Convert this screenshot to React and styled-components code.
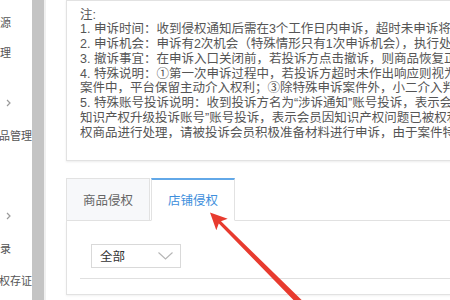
import React from 'react'
import styled, { createGlobalStyle } from 'styled-components'

const GlobalStyle = createGlobalStyle`
  html, body {
    margin: 0;
    padding: 0;
  }
  body {
    width: 450px;
    height: 300px;
    overflow: hidden;
    background: #fff;
    font-family: 'Liberation Sans', 'Noto Sans CJK SC', sans-serif;
  }
`

const Page = styled.div`
  position: relative;
  display: flex;
  width: 450px;
  height: 300px;
  overflow: hidden;
`

const Sidebar = styled.div`
  width: 32px;
  flex-shrink: 0;
  display: flex;
  flex-direction: column;
  padding-top: 7px;
  box-sizing: border-box;
  overflow: hidden;
`

const MenuItem = styled.div`
  flex-shrink: 0;
  height: ${p => p.$h}px;
  margin-top: ${p => p.$mt || 0}px;
  padding-right: ${p => p.$pr || 0}px;
  display: flex;
  align-items: center;
  justify-content: flex-end;
  white-space: nowrap;
  font-size: 11px;
  color: #555;
`

const ScrollThumb = styled.div`
  width: 12px;
  flex-shrink: 0;
  background: #c4c4c4;
`

const ScrollTrack = styled.div`
  width: 2px;
  flex-shrink: 0;
  background: #f0f0f0;
`

const Main = styled.div`
  flex: 1;
  min-width: 0;
  padding-left: 20px;
  overflow: hidden;
`

const Content = styled.div`
  width: 520px;
`

const Notice = styled.div`
  border: 1px solid #e2e2e2;
  box-shadow: 0 1px 2px rgba(0, 0, 0, 0.08);
  padding: 6.5px 13px 19.5px;
  font-size: 12.5px;
  line-height: 14.75px;
  color: #555;
  white-space: nowrap;
`

const TabBar = styled.div`
  display: flex;
  margin-top: 17px;
  border-bottom: 1px solid #e2e2e2;
`

const Tab = styled.div`
  width: 84px;
  height: ${p => (p.$active ? 43 : 42)}px;
  box-sizing: border-box;
  margin-right: 1px;
  margin-bottom: ${p => (p.$active ? -1 : 0)}px;
  display: flex;
  align-items: center;
  justify-content: center;
  font-size: 12.5px;
  color: ${p => (p.$active ? '#3f8fdc' : '#666')};
  background: ${p => (p.$active ? '#fff' : '#f7f8fa')};
  border: 1px solid #e2e2e2;
  border-bottom: ${p => (p.$active ? '1px solid #fff' : 'none')};
  border-top: ${p => (p.$active ? '2px solid #62a8e8' : '1px solid #e2e2e2')};
`

const Card = styled.div`
  border: 1px solid #e2e2e2;
  border-top: none;
  box-shadow: 0 1px 2px rgba(0, 0, 0, 0.06);
  padding: 23px 0 15px 13px;
`

const FilterRow = styled.div`
  display: flex;
  margin-left: 11px;
`

const Select = styled.div`
  width: 90px;
  height: 24px;
  box-sizing: border-box;
  border: 1px solid #d9d9d9;
  display: flex;
  align-items: center;
  justify-content: space-between;
  padding: 0 7px 0 8px;
  font-size: 12.5px;
  color: #333;
`

const TableTop = styled.div`
  margin-top: 10px;
  border-top: 1px solid #e0e0e0;
`

const Overlay = styled.svg`
  position: absolute;
  left: 0;
  top: 0;
  pointer-events: none;
`

const lines = [
  '注:',
  '1. 申诉时间：收到侵权通知后需在3个工作日内申诉，超时未申诉将视为放弃申诉',
  '2. 申诉机会：申诉有2次机会（特殊情形只有1次申诉机会），执行处罚后不可再申诉',
  '3. 撤诉事宜：在申诉入口关闭前，若投诉方点击撤诉，则商品恢复正常状态',
  '4. 特殊说明：①第一次申诉过程中，若投诉方超时未作出响应则视为申诉成立；②在投诉',
  '案件中，平台保留主动介入权利；③除特殊申诉案件外，小二介入判定后不可再申诉',
  '5. 特殊账号投诉说明：收到投诉方名为“涉诉通知”账号投诉，表示会员因知识产权',
  '知识产权升级投诉账号”账号投诉，表示会员因知识产权问题已被权利人起诉，需对侵',
  '权商品进行处理，请被投诉会员积极准备材料进行申诉，由于案件特殊，申诉需谨慎',
]

const MenuArrow = () => (
  <svg width="5" height="8" viewBox="0 0 5 8">
    <polyline points="1,1 4,4 1,7" fill="none" stroke="#9a9a9a" strokeWidth="1.2" />
  </svg>
)

const App = () => {
  return (
    <Page>
      <GlobalStyle />
      <Sidebar>
        <MenuItem $h={30} $pr={21}>资源</MenuItem>
        <MenuItem $h={30} $pr={21}>管理</MenuItem>
        <MenuItem $h={36} $mt={18} $pr={21}><MenuArrow /></MenuItem>
        <MenuItem $h={28}>商品管理</MenuItem>
        <MenuItem $h={34} $mt={50} $pr={21}><MenuArrow /></MenuItem>
        <MenuItem $h={30} $pr={21}>记录</MenuItem>
        <MenuItem $h={34}>知识产权存证</MenuItem>
      </Sidebar>
      <ScrollThumb />
      <ScrollTrack />
      <Main>
        <Content>
          <Notice>
            {lines.map(l => (
              <div key={l}>{l}</div>
            ))}
          </Notice>
          <TabBar>
            <Tab>商品侵权</Tab>
            <Tab $active>店铺侵权</Tab>
          </TabBar>
          <Card>
            <FilterRow>
              <Select>
                全部
                <svg width="15" height="8" viewBox="0 0 15 8">
                  <polyline points="0.5,0.5 7.5,7 14.5,0.5" fill="none" stroke="#b5b5b5" strokeWidth="1.1" />
                </svg>
              </Select>
            </FilterRow>
            <TableTop />
          </Card>
        </Content>
      </Main>
      <Overlay width="450" height="300" viewBox="0 0 450 300">
        <polygon
          points="210,212.5 227.7,218.8 221,221.3 304,302.3 299.8,306.5 218.8,223.5 216.3,230.2"
          fill="#e83b2f"
        />
      </Overlay>
    </Page>
  )
}

export default App
